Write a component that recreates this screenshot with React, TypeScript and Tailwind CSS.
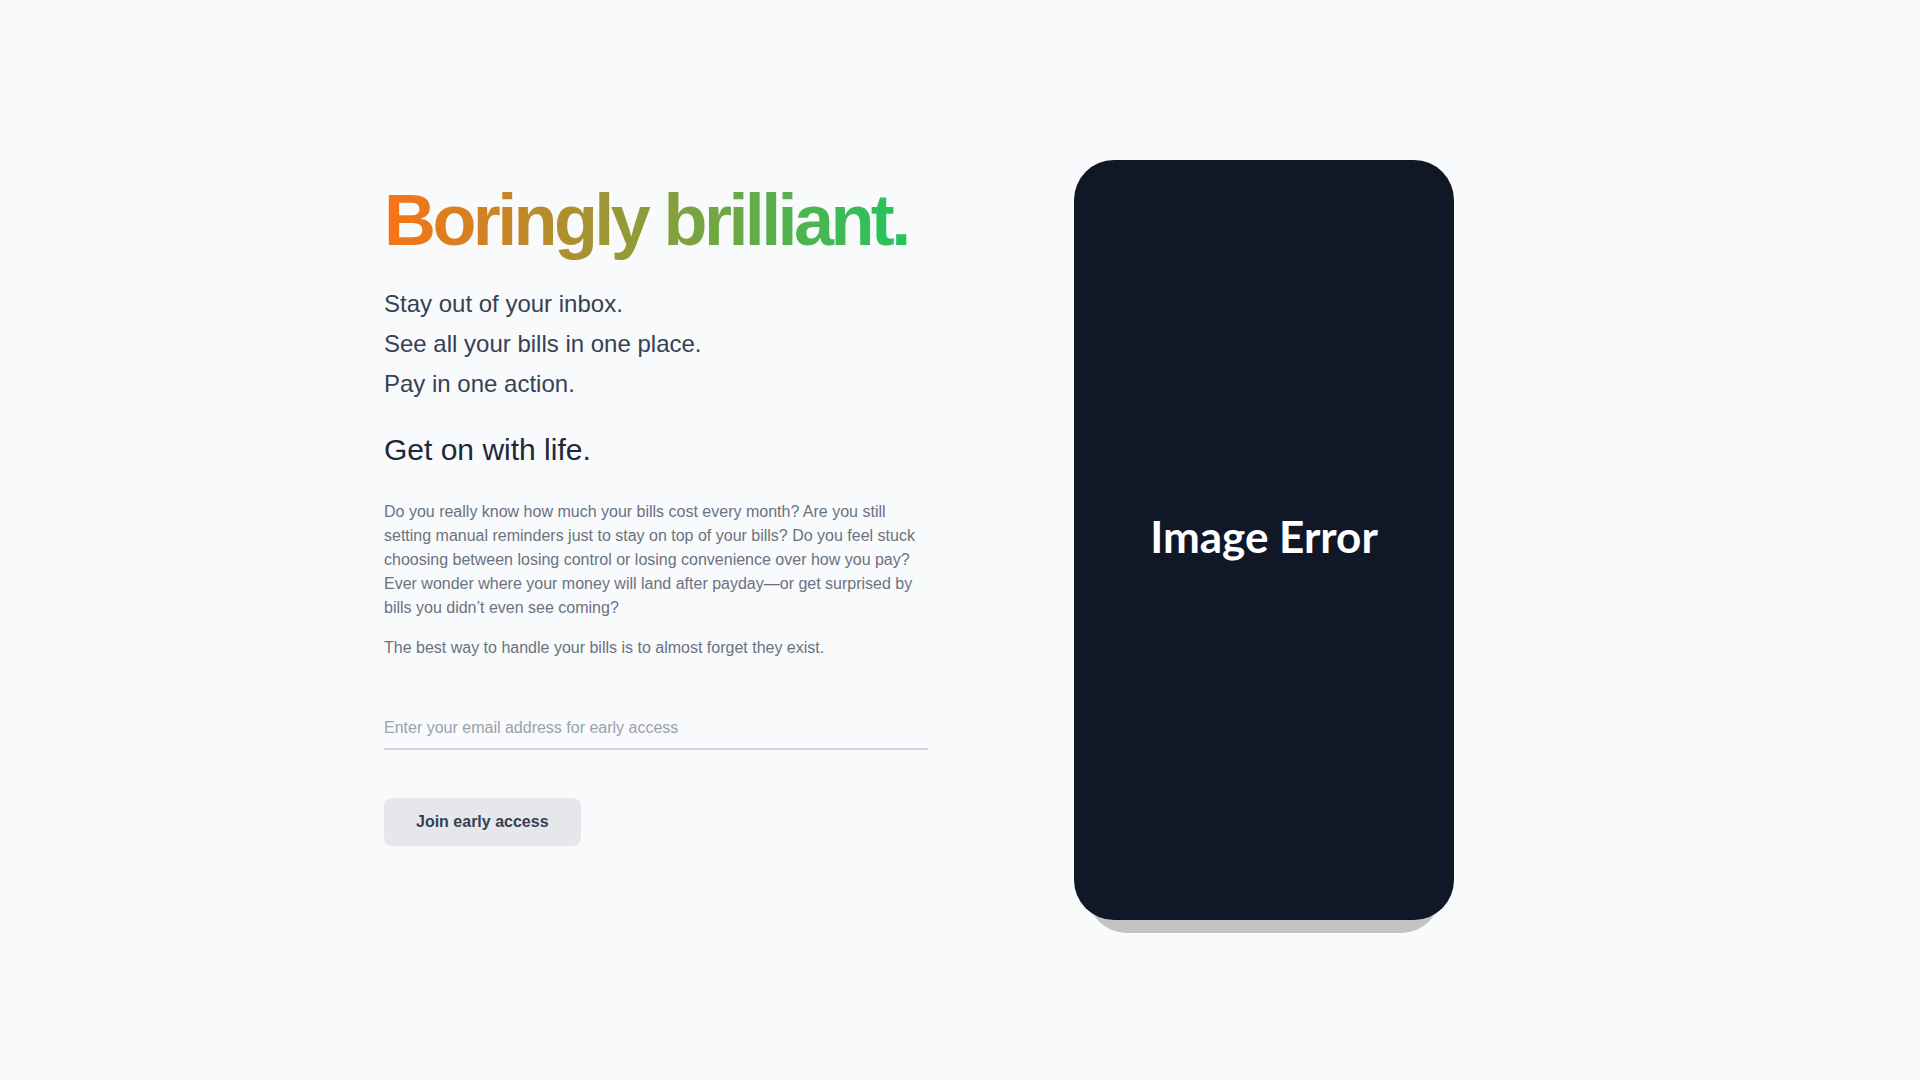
export default function App() {
  return (
    <main className="min-h-screen bg-gray-50 font-['Liberation_Sans',Arial,sans-serif]">
      <div className="mx-auto grid max-w-7xl grid-cols-2 items-start gap-16 px-16 py-40">
        <section className="pt-6">
          <h1 className="w-fit whitespace-nowrap bg-linear-to-r/srgb from-[#f97316] to-[#22c55e] bg-clip-text pb-2 text-7xl leading-none font-bold tracking-tighter text-transparent">
            Boringly brilliant.
          </h1>
          <div className="mt-6 space-y-2 text-2xl text-gray-700">
            <p>Stay out of your inbox.</p>
            <p>See all your bills in one place.</p>
            <p>Pay in one action.</p>
          </div>
          <h2 className="mt-8 text-3xl text-gray-800">Get on with life.</h2>
          <p className="mt-8 text-base text-gray-500">
            Do you really know how much your bills cost every month? Are you still setting manual
            reminders just to stay on top of your bills? Do you feel stuck choosing between losing
            control or losing convenience over how you pay? Ever wonder where your money will land
            after payday—or get surprised by bills you didn’t even see coming?
          </p>
          <p className="mt-4 text-base text-gray-500">
            The best way to handle your bills is to almost forget they exist.
          </p>
          <form className="mt-12" onSubmit={(e) => e.preventDefault()}>
            <input
              type="email"
              placeholder="Enter your email address for early access"
              className="w-full border-b-2 border-gray-300 bg-transparent py-2 text-base text-gray-700 placeholder:text-gray-400 outline-none"
            />
            <button
              type="submit"
              className="mt-12 rounded-lg bg-gray-200 px-8 py-3 text-base font-bold text-gray-700"
            >
              Join early access
            </button>
          </form>
        </section>

        <section className="flex justify-center">
          <div className="relative h-[760px] w-[380px]">
            <div className="absolute inset-x-[13px] top-[13px] -bottom-[13px] rounded-[40px] bg-[#c2c4c1]" />
            <div className="relative flex h-full w-full items-center justify-center rounded-[40px] bg-gray-900">
              <span className="pb-2 font-['Lato',sans-serif] text-[44px] font-bold text-white">
                Image Error
              </span>
            </div>
          </div>
        </section>
      </div>
    </main>
  );
}
